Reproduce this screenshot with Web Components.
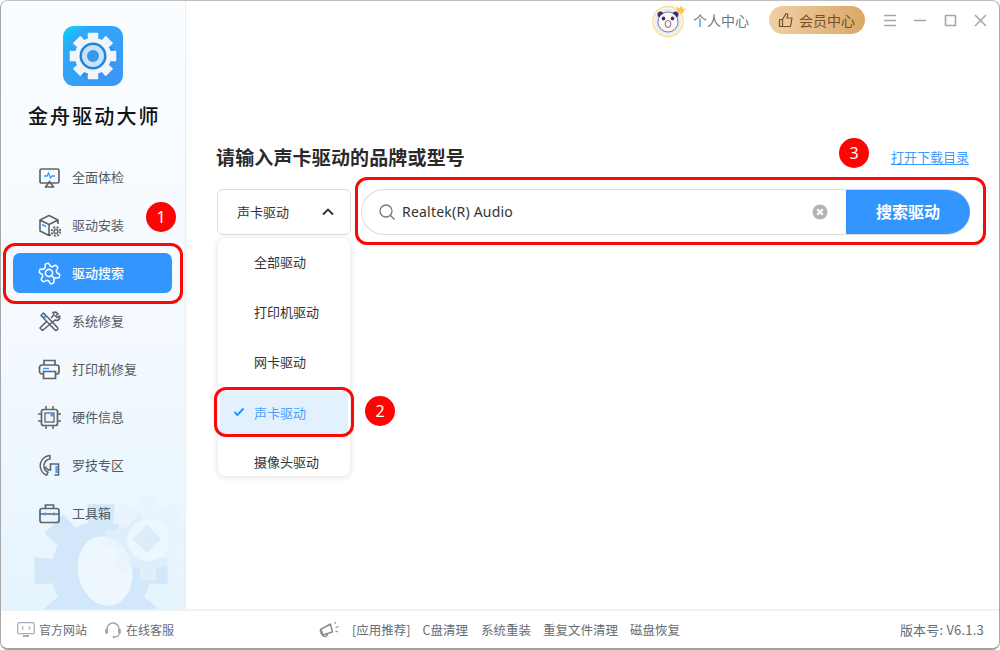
<!DOCTYPE html>
<html lang="zh-CN"><head><meta charset="utf-8"><title>金舟驱动大师</title>
<style>
html,body{margin:0;padding:0;width:1000px;height:650px;overflow:hidden;background:#fff;font-family:"Noto Sans CJK SC","Noto Sans",sans-serif}
</style></head><body>
<app-shell>
  <side-bar slot="side">
    <nav-item icon="check">全面体检</nav-item>
    <nav-item icon="box">驱动安装</nav-item>
    <nav-item icon="search" active>驱动搜索</nav-item>
    <nav-item icon="tools">系统修复</nav-item>
    <nav-item icon="printer">打印机修复</nav-item>
    <nav-item icon="chip">硬件信息</nav-item>
    <nav-item icon="logi">罗技专区</nav-item>
    <nav-item icon="case">工具箱</nav-item>
  </side-bar>
  <top-bar slot="top"></top-bar>
  <driver-search slot="main"></driver-search>
  <app-footer slot="foot"></app-footer>
  <red-box slot="marks" style="left:3px;top:243px;width:180px;height:61px"></red-box>
  <red-dot slot="marks" style="left:146px;top:202px">1</red-dot>
  <red-box slot="marks" style="left:214px;top:387px;width:140px;height:50px"></red-box>
  <red-dot slot="marks" style="left:365px;top:396px">2</red-dot>
  <red-box slot="marks" style="left:355px;top:177px;width:631px;height:68px"></red-box>
  <red-dot slot="marks" style="left:839px;top:138px">3</red-dot>
</app-shell>
<script>
const S='#5f646a',B='#3d9bff';
function lobes(cx,cy,n,rm,amp){let d='';for(let i=0;i<=120;i++){const t=i/120*Math.PI*2;const c=Math.max(-1,Math.min(1,1.7*Math.cos(n*t-Math.PI/2)));const r=rm+amp*c;d+=(i?'L':'M')+(cx+Math.cos(t)*r).toFixed(2)+' '+(cy+Math.sin(t)*r).toFixed(2)}return d+'Z'}
const ICONS={
check:`<rect x="2" y="3" width="19" height="14" rx="1.5" fill="none" stroke="${S}" stroke-width="1.7"/><path d="M6 10h3l1.5-3 2 5 1.500-2h3" fill="none" stroke="${B}" stroke-width="1.3"/><path d="M11.500 15.500l-4 5.500h8z" fill="none" stroke="${S}" stroke-width="1.7" stroke-linejoin="round"/>`,
box:`<path d="M11 1.500l9 4.500v4M11 1.500L2 6v11l9 4.500 2-1M2 6l9 4.500 9-4.500M11 10.500V21" fill="none" stroke="${S}" stroke-width="1.6" stroke-linejoin="round"/><path d="M4 10.500l4 2" stroke="${B}" stroke-width="1.500"/><circle cx="18" cy="17.500" r="2" fill="none" stroke="${S}" stroke-width="1.400"/><circle cx="18" cy="17.500" r="4.300" fill="none" stroke="${S}" stroke-width="1.800" stroke-dasharray="2 1.400"/>`,
search:`<path d="${lobes(11.5,11.5,6,8.8,1.5)}" fill="none" stroke="#fff" stroke-width="1.500" stroke-linejoin="round"/><circle cx="11" cy="11" r="3.600" fill="none" stroke="#fff" stroke-width="1.600"/><path d="M13.700 13.700l2.300 2.300" stroke="#fff" stroke-width="1.600" stroke-linecap="round"/>`,
tools:`<path d="M3 5.500L5.500 3l14 14.500a1.800 1.800 0 0 1-2.500 2.500z" fill="none" stroke="${S}" stroke-width="1.600" stroke-linejoin="round"/><path d="M5.500 6l2 2" stroke="${B}" stroke-width="2"/><path d="M13 8l3-3-1-2.500c2-.8 4 0 5 1.500l-2.500 2 1.500 1.500 2.500-1.500c.5 2-.5 4-2.500 4.500l-2-.5L4.500 20.500 2 18l7-7" fill="none" stroke="${S}" stroke-width="1.600" stroke-linejoin="round"/>`,
printer:`<path d="M6 7V2.500h11V7" fill="none" stroke="${S}" stroke-width="1.700"/><rect x="1.500" y="7" width="19.500" height="9" rx="2.500" fill="none" stroke="${S}" stroke-width="1.700"/><path d="M5 10.500h6" stroke="${B}" stroke-width="1.500"/><path d="M5.500 13.500h12V20.500h-12z" fill="#f3f9ff" stroke="${S}" stroke-width="1.700"/>`,
chip:`<rect x="3.500" y="3.500" width="16" height="16" rx="2" fill="none" stroke="${S}" stroke-width="1.700"/><rect x="7" y="7" width="9" height="9" fill="none" stroke="${S}" stroke-width="1.300"/><rect x="12.500" y="7.500" width="3" height="3" fill="${B}"/><path d="M8 0v3.500M15 0v3.500M8 19.500V23M15 19.500V23M0 8h3.500M0 15h3.500M19.500 8H23M19.500 15H23" stroke="${S}" stroke-width="1.500"/>`,
logi:`<path d="M12 1.500A10.300 10.300 0 0 0 8.500 21.300L10 18.300A7 7 0 0 1 12 5z" fill="none" stroke="${S}" stroke-width="1.500" stroke-linejoin="round"/><path d="M7.500 12.500c.5 2.500 2.500 3.500 5 3.500v-6h8v11h-4" fill="none" stroke="${S}" stroke-width="1.600"/><path d="M18.500 12v7" stroke="${B}" stroke-width="2.200"/>`,
case:`<rect x="2" y="6.500" width="19" height="14" rx="2" fill="none" stroke="${S}" stroke-width="1.700"/><path d="M7.500 6.500V3h8v3.500M2 12h19" fill="none" stroke="${S}" stroke-width="1.700"/><path d="M7 10.500v3M16 10.500v3" stroke="${B}" stroke-width="1.500"/>`
};
function gear(cx,cy,ro,ri,n,tw){let d='';const st=Math.PI*2/n;for(let i=0;i<n;i++){const a=i*st;const p=[[a-st/2+0.02,ri],[a-tw*1.25,ri],[a-tw,ro],[a+tw,ro],[a+tw*1.25,ri]];p.forEach((q,j)=>{d+=(i==0&&j==0?'M':'L')+(cx+Math.cos(q[0])*q[1]).toFixed(2)+' '+(cy+Math.sin(q[0])*q[1]).toFixed(2)})}return d+'Z'}
class Base extends HTMLElement{
  constructor(){super();this.attachShadow({mode:'open'}).innerHTML=this.tpl()}
  tpl(){return ''}
}
customElements.define('app-shell',class extends Base{tpl(){return `<style>
:host{display:block;position:relative;width:1000px;height:650px;box-sizing:border-box;background:#fff;border:1px solid #aaa;border-width:1px 1px 2px 1px;border-color:#bdbdbd #a8a8a8 #a0a0a0 #a8a8a8;border-radius:8px;overflow:hidden}
.col{display:flex;flex-direction:column;height:100%}
.mid{flex:1;display:flex;min-height:0}
.right{flex:1;display:flex;flex-direction:column;min-width:0}
.marks{position:absolute;left:-1px;top:-1px;width:0;height:0}
</style><div class="col"><div class="mid"><slot name="side"></slot><div class="right"><slot name="top"></slot><slot name="main"></slot></div></div><slot name="foot"></slot></div><div class="marks"><slot name="marks"></slot></div>`}});
customElements.define('side-bar',class extends Base{tpl(){return `<style>
:host{display:block;position:relative;width:185px;box-sizing:border-box;flex:none;border-right:1px solid #e9eef2;background:linear-gradient(180deg,#fafdff 0%,#f5faff 50%,#e6f4fe 100%);overflow:hidden}
.logo{display:block;margin:25px auto 0 62px;width:60px;height:60px}
h1{margin:16px 0 0 0;padding-left:27px;font:500 20px/28px "Noto Sans CJK SC",sans-serif;letter-spacing:2.1px;color:#111}
nav{margin-top:23px;display:flex;flex-direction:column;position:relative;z-index:1}
.bg{position:absolute;left:30px;top:490px;width:155px;height:120px}
</style>
<svg class="bg" viewBox="0 0 155 120"><path d="${gear(70,80,68,50,8,.2)}" fill="#d3e7fa"/><ellipse cx="74" cy="80" rx="27" ry="35" fill="#eef7fe" transform="rotate(-12 74 80)"/><path d="${gear(117,47,43,32,8,.2)}" fill="#e6f2fb" opacity=".62"/><circle cx="117" cy="49" r="21" fill="#eef7fe" opacity=".8"/><rect x="106" y="38" width="20" height="20" fill="#dcecf9" transform="rotate(45 116 48)"/></svg>
<svg class="logo" viewBox="0 0 60 60"><defs><linearGradient id="g" x1="0" y1="0" x2="1" y2="1"><stop offset="0" stop-color="#06d8f6"/><stop offset=".22" stop-color="#2fa8fb"/><stop offset="1" stop-color="#3c96f7"/></linearGradient><linearGradient id="sh" x1="0" y1="0" x2="1" y2="1"><stop offset=".3" stop-color="#1f6fc4" stop-opacity=".55"/><stop offset=".85" stop-color="#3c96f7" stop-opacity="0"/></linearGradient></defs>
<rect width="60" height="60" rx="11" fill="url(#g)"/><path d="M12 44L42 14 60 34V49A11 11 0 0 1 49 60H30z" fill="url(#sh)"/><path d="${gear(30,30,23,17.500,8,.2)}" fill="#f1f4f8" stroke="#f1f4f8" stroke-width="1.500" stroke-linejoin="round"/><circle cx="30" cy="30" r="13.500" fill="#1f86d6"/><circle cx="30" cy="30" r="11" fill="#c6e3f9"/><circle cx="30" cy="30" r="6" fill="#3a97e4"/></svg>
<h1>金舟驱动大师</h1><nav><slot></slot></nav>`}});
customElements.define('nav-item',class extends Base{tpl(){const a=this.hasAttribute('active');const ic=ICONS[this.getAttribute('icon')]||'';return `<style>
:host{display:block;height:48px}
.i{margin:4px 12px;height:40px;width:159px;box-sizing:border-box;border-radius:7px;display:flex;align-items:center;padding-left:25px;font:13px/18px "Noto Sans CJK SC",sans-serif;color:#555a60;background:transparent}
.i.a{background:#3396ff;color:#fff;font-weight:500}
svg{width:23px;height:23px;margin-right:11px;flex:none}
</style><div class="i ${a?'a':''}"><svg viewBox="0 0 23 23">${ic}</svg><slot></slot></div>`}});
customElements.define('top-bar',class extends Base{tpl(){return `<style>
:host{display:flex;align-items:center;height:38px;box-sizing:border-box;padding-left:465px;font:14px/18px "Noto Sans CJK SC",sans-serif;color:#6d7885;flex:none}
.av{width:36px;height:36px;flex:none;margin-right:6px}
.u{width:56px;margin-right:20px;white-space:nowrap}
.vip{width:96px;height:28px;border-radius:14px;background:linear-gradient(90deg,#efcfa6,#dba866);display:flex;align-items:center;box-sizing:border-box;padding-left:9px;color:#75512a;flex:none;margin-right:10px;white-space:nowrap}
.vip svg{width:16px;height:16px;margin-right:5px}
.w{width:30px;height:20px;display:flex;justify-content:center;align-items:center;flex:none}
</style>
<svg class="av" viewBox="0 0 36 36"><circle cx="17" cy="19.500" r="16" fill="#fde3a4"/><circle cx="17" cy="19.500" r="13.500" fill="#d8edf8" stroke="#fff" stroke-width="1"/><circle cx="9.500" cy="12.500" r="3" fill="#3d2f6e"/><circle cx="24.500" cy="12.500" r="3" fill="#3d2f6e"/><ellipse cx="17" cy="20" rx="10" ry="10" fill="#fdf8f2" stroke="#5b4a77" stroke-width=".7"/><ellipse cx="12.500" cy="16.500" rx="1.800" ry="2" fill="#3d2f6e"/><ellipse cx="21.500" cy="16.500" rx="1.800" ry="2" fill="#3d2f6e"/><ellipse cx="17" cy="22" rx="2.800" ry="3.500" fill="none" stroke="#7f6d8f"/><path d="M26 10l-.5-6 3 2.500 2-3.500 1.500 4 3-.5-4 5.500z" fill="#f6c860"/></svg>
<span class="u">个人中心</span>
<div class="vip"><svg viewBox="0 0 16 16"><path d="M1.500 7.500h3v7h-3zM4.500 7.500L8 1.500c1.500 0 2 1 1.500 2.500L9 6h5l-1.500 8.500h-8" fill="none" stroke="#75512a" stroke-width="1.200" stroke-linejoin="round"/></svg>会员中心</div>
<div class="w"><svg width="14" height="13" viewBox="0 0 14 13"><path d="M1 1.500h12M1 6.500h12M1 11.500h12" stroke="#a6a6a6" stroke-width="1.500"/></svg></div>
<div class="w"><svg width="14" height="13" viewBox="0 0 14 13"><path d="M1 6.500h12" stroke="#a6a6a6" stroke-width="1.600"/></svg></div>
<div class="w"><svg width="13" height="13" viewBox="0 0 13 13"><rect x="1.500" y="1.500" width="10" height="10" rx=".5" fill="none" stroke="#a6a6a6" stroke-width="1.600"/></svg></div>
<div class="w"><svg width="13" height="13" viewBox="0 0 13 13"><path d="M1 1l11 11M12 1L1 12" stroke="#a6a6a6" stroke-width="1.500"/></svg></div>`}});
customElements.define('driver-search',class extends Base{tpl(){return `<style>
:host{display:block;flex:1;padding:104px 0 0 31px;box-sizing:border-box;font-family:"Noto Sans CJK SC",sans-serif}
.head{display:flex;align-items:center;height:28px;width:752px;justify-content:space-between}
h2{margin:0 0 0 -1px;font:700 19px/28px "Noto Sans CJK SC",sans-serif;letter-spacing:.15px;color:#2a2a2a;white-space:nowrap}
a{font-size:13px;line-height:18px;color:#3c9bfb;text-decoration:underline;text-underline-offset:2px;white-space:nowrap}
.row{display:flex;gap:10px;margin-top:18px;align-items:flex-start}
</style><div class="head"><h2>请输入声卡驱动的品牌或型号</h2><a>打开下载目录</a></div>
<div class="row"><driver-select></driver-select><search-box></search-box></div>`}});
customElements.define('driver-select',class extends Base{tpl(){const items=['全部驱动','打印机驱动','网卡驱动','声卡驱动','摄像头驱动'];return `<style>
:host{display:block;width:134px;font:13px/18px "Noto Sans CJK SC",sans-serif;color:#333}
.sel{height:46px;box-sizing:border-box;border:1px solid #dcdcdc;border-radius:6px;display:flex;align-items:center;justify-content:space-between;padding:0 16px 0 19px}
.menu{margin:3px 1px 0;height:238px;width:132px;box-sizing:border-box;border-radius:7px;background:#fff;box-shadow:0 1px 6px rgba(0,0,0,.14);overflow:hidden}
.it{height:50px;display:flex;align-items:center;padding:0 0 2px 36px;position:relative;box-sizing:border-box}
.it.s{color:#4aa0fb;background:#e3f1ff;height:44px;margin:3px 2px;padding:0 0 0 34px;border-radius:3px}
.it svg{position:absolute;left:13px;top:16px}
</style><div class="sel"><span>声卡驱动</span><svg width="12" height="8" viewBox="0 0 12 8"><path d="M1 6.500l5-5 5 5" fill="none" stroke="#333" stroke-width="1.900"/></svg></div>
<div class="menu">${items.map((t,i)=>`<div class="it ${i==3?'s':''}">${i==3?'<svg width="12" height="10" viewBox="0 0 12 10"><path d="M1.500 5l3 3 6-6.500" fill="none" stroke="#2f93fb" stroke-width="2"/></svg>':''}${t}</div>`).join('')}</div>`}});
customElements.define('search-box',class extends Base{tpl(){return `<style>
:host{display:flex;width:609px;height:46px;box-sizing:border-box;border:1px solid #dcdcdc;border-right:none;border-radius:23px;overflow:hidden;font-family:"Noto Sans","Noto Sans CJK SC",sans-serif}
.l{flex:1;display:flex;align-items:center;padding-left:16px;font-size:14px;color:#333;letter-spacing:.22px}
.l svg.m{width:18px;height:18px;margin-right:6px}
.l span{flex:1;padding-bottom:2px}
.x{width:16px;height:16px;margin-right:18px}
.btn{width:124px;margin:-1px 0;background:#3396ff;color:#fff;display:flex;align-items:center;justify-content:center;font:700 16px/20px "Noto Sans CJK SC",sans-serif;padding-bottom:2px;box-sizing:border-box}
</style><div class="l"><svg class="m" viewBox="0 0 18 18"><circle cx="8" cy="8" r="6" fill="none" stroke="#777" stroke-width="1.300"/><path d="M12.500 12.500l4 4" stroke="#777" stroke-width="1.400"/></svg><span>Realtek(R) Audio</span><svg class="x" viewBox="0 0 16 16"><circle cx="8" cy="8" r="7.500" fill="#b4b4b4"/><path d="M5.200 5.200l5.600 5.600M10.800 5.200l-5.600 5.600" stroke="#fff" stroke-width="2"/></svg></div><div class="btn">搜索驱动</div>`}});
customElements.define('app-footer',class extends Base{tpl(){return `<style>
:host{display:flex;align-items:center;height:39px;box-sizing:border-box;border-top:2px solid #eff1f3;padding:0 15px 0 16px;font:12px/16px "Noto Sans CJK SC",sans-serif;color:#666c74;flex:none;white-space:nowrap;background:#fff}
svg{flex:none}
.a{margin-left:4px}.b{margin-left:4px}
.mk{margin-left:145px}
.ad{margin-left:12px;font-size:12.5px}.ad+.ad{margin-left:12px}
.ad.w3{margin-left:13px}
.v{margin-left:auto;font-size:13px;letter-spacing:.2px}
</style>
<svg width="18" height="16" viewBox="0 0 18 16"><rect x=".7" y=".7" width="16.600" height="11" rx="1.500" fill="#fff" stroke="#a9adb2" stroke-width="1.300"/><path d="M6.500 4.500L5 6.200l1.500 1.700M11.500 4.500L13 6.200l-1.500 1.700" fill="none" stroke="#8e9399"/><path d="M6 14h6" stroke="#a9adb2" stroke-width="2"/></svg><span class="a">官方网站</span>
<svg style="margin-left:17px" width="18" height="18" viewBox="0 0 18 18"><path d="M3 10V8a6 6 0 0 1 12 0v2" fill="none" stroke="#9fa4a9" stroke-width="1.400"/><rect x="1.200" y="7.500" width="2.800" height="5.500" rx="1.400" fill="#9fa4a9"/><rect x="14" y="7.500" width="2.800" height="5.500" rx="1.400" fill="#9fa4a9"/><path d="M15 13c0 2-2 3-5 3" fill="none" stroke="#9fa4a9" stroke-width="1.200"/><circle cx="10" cy="16" r="1.300" fill="#9fa4a9"/></svg><span class="b">在线客服</span>
<svg class="mk" width="21" height="18" viewBox="0 0 21 18"><path d="M1.500 8.500l10-5.500 2 8-10 3zM4 14.500a2.500 2.500 0 0 0 4.500-1.500" fill="none" stroke="#8b8f94" stroke-width="1.500" stroke-linejoin="round"/><path d="M1.500 9l2 5" stroke="#8b8f94" stroke-width="2.500"/><path d="M15.500 3l1.500-2M16.500 6.500l3-.8M16.500 10l2.500 1" stroke="#8b8f94" stroke-width="1.200"/></svg>
<span class="ad">[应用推荐]</span><span class="ad">C盘清理</span><span class="ad" style="margin-left:13px">系统重装</span><span class="ad">重复文件清理</span><span class="ad">磁盘恢复</span>
<span class="v">版本号: V6.1.3</span>`}});
customElements.define('red-box',class extends Base{tpl(){return `<style>:host{display:block;position:absolute;box-sizing:border-box;border:3px solid #fb0808;border-radius:12px;pointer-events:none}</style>`}});
customElements.define('red-dot',class extends Base{tpl(){return `<style>:host{display:flex;position:absolute;width:30px;height:30px;border-radius:50%;background:#fd0505;color:#fff;align-items:center;justify-content:center;font:16px/20px "Noto Sans",sans-serif}</style><slot></slot>`}});
</script></body></html>
